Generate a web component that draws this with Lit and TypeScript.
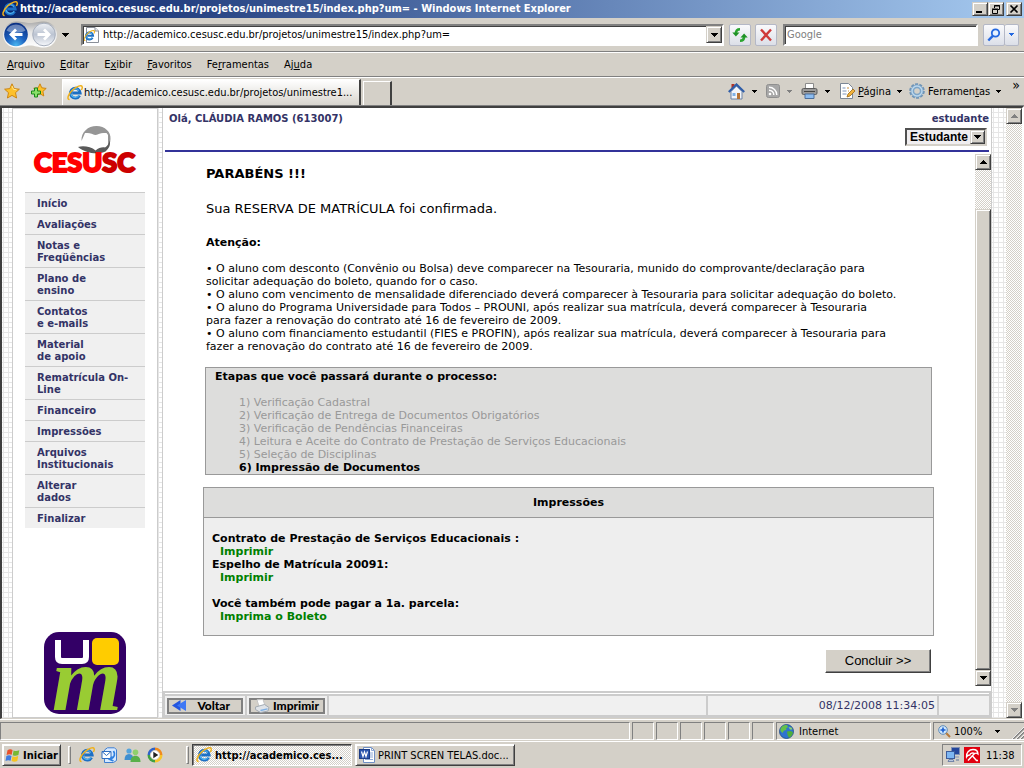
import { LitElement, html, svg, css, nothing, TemplateResult } from "lit";
import { customElement } from "lit/decorators.js";

const icon = (w: number, h: number, box: string, body: unknown) =>
  html`<svg class="icon" width=${w} height=${h} viewBox=${box} aria-hidden="true">${body}</svg>`;

const ieShape = svg`
  <path d="M12.6 10.6A4.9 4.9 0 1 1 13.2 8H5.2" fill="none" stroke="#1c6fc4" stroke-width="2.9"/>
  <path d="M12.2 10.2A4.5 4.5 0 0 1 4 9" fill="none" stroke="#4fb2ee" stroke-width="1.2"/>
  <path d="M4.6 5.6A4.6 4.6 0 0 1 12 5.5" fill="none" stroke="#63c3f6" stroke-width="1"/>
  <path d="M2.6 14.6C-.6 14.6 1.2 9 5.6 5 9.6 1.200 14.600-.4 15.200 1.800c.3 1-.3 2.300-.8 3.200" fill="none" stroke="#f0b11c" stroke-width="1.500"/>`;

const ie = (s = 16) => icon(s, s, "0 0 16 16", ieShape);

const pageIe = icon(16, 16, "0 0 16 16", svg`
  <path d="M2.500 .5h8.500l3.500 3.500v11.500h-12z" fill="#fff" stroke="#8a8f98"/>
  <path d="M11 .5V4h3.500" fill="#e8ecf2" stroke="#8a8f98"/>
  <g transform="translate(-.5 3) scale(.72)">${ieShape}</g>`);

const caret = (color = "#000", up = false) =>
  icon(7, 4, "0 0 7 4", up
    ? svg`<path d="M3 0h1v1h1v1h1v1h1v1H0V3h1V2h1V1h1z" fill=${color}/>`
    : svg`<path d="M0 0h7v1H6v1H5v1H4v1H3V3H2V2H1V1H0z" fill=${color}/>`);

const smallCaret = (color = "#000") =>
  icon(5, 3, "0 0 5 3", svg`<path d="M0 0h5v1H4v1H3v1H2V2H1V1H0z" fill=${color}/>`);

const navArrows = icon(57, 27, "0 0 57 27", svg`
  <defs>
    <radialGradient id="bk" cx=".5" cy=".95" r=".9"><stop offset="0" stop-color="#49b4ef"/><stop offset=".45" stop-color="#1d62c0"/><stop offset="1" stop-color="#0b3184"/></radialGradient>
    <linearGradient id="fw" x1="0" y1="0" x2="0" y2="1"><stop offset="0" stop-color="#eef1f5"/><stop offset=".5" stop-color="#bcc4d2"/><stop offset="1" stop-color="#f6f8fb"/></linearGradient>
    <linearGradient id="rim" x1="0" y1="0" x2="0" y2="1"><stop offset="0" stop-color="#a9a9a9"/><stop offset=".4" stop-color="#e6e6e6"/><stop offset="1" stop-color="#fff"/></linearGradient>
  </defs>
  <path d="M14 .5C21 .5 23 2 28 2S36 .5 42 .5a13 13 0 0 1 0 26c-6 0-9-2-14-2s-7 2-14 2a13 13 0 0 1 0-26z" fill="url(#rim)"/>
  <circle cx="14" cy="13.500" r="11.800" fill="url(#bk)"/>
  <path d="M4.500 9.500a10.500 10.500 0 0 1 19 0c-5 3-14 3-19 0z" fill="#fff" opacity=".38"/>
  <path d="M20.500 13.500H9.500M14 8.500l-5 5 5 5" fill="none" stroke="#fff" stroke-width="2.800"/>
  <circle cx="42" cy="13.500" r="11.300" fill="url(#fw)" stroke="#a7afbd"/>
  <path d="M35.500 13.500h11M42 8.500l5 5-5 5" fill="none" stroke="#fff" stroke-width="2.800"/>`);

const refresh = icon(16, 16, "0 0 16 16", svg`
  <path d="M8 2.200C4.800 2.200 3.900 3.800 3.900 6.500" fill="none" stroke="#2ba530" stroke-width="2.600"/>
  <path d="M.3 5.500h7.200L3.900 9.600z" fill="#1f9226"/>
  <path d="M8 13.800c3.200 0 4.100-1.600 4.100-4.300" fill="none" stroke="#2ba530" stroke-width="2.600"/>
  <path d="M8.500 10.500h7.200l-3.600-4.100z" fill="#1f9226"/>`);

const stop = icon(14, 14, "0 0 14 14", svg`
  <path d="M2 1.500l10 11M12 1.500l-10 11" stroke="#cf3a3a" stroke-width="2.400"/>`);

const magnifier = icon(14, 14, "0 0 14 14", svg`
  <circle cx="8.500" cy="5" r="3.700" fill="#e6f1ff" stroke="#2468e0" stroke-width="1.800"/>
  <path d="M5.800 7.800L1.300 12.500" stroke="#2468e0" stroke-width="2.400"/>`);

const star = icon(16, 16, "0 0 16 16", svg`
  <path d="M8 .8l2.200 4.800 5.200.6-3.900 3.500 1.100 5.300L8 12.400 3.400 15l1.100-5.300L.6 6.200l5.200-.6z" fill="#fdc12c" stroke="#c97f0a" stroke-width=".9"/>
  <path d="M8 3l1.500 3.300 3 .5" fill="none" stroke="#ffe79a"/>`);

const addStar = icon(17, 16, "0 0 17 16", svg`
  <path d="M10 .8l1.800 4 4.400.6-3.300 3 .9 4.600L10 10.700 6 13l1-4.600-3.300-3 4.400-.6z" fill="#fdc12c" stroke="#c97f0a" stroke-width=".9"/>
  <path d="M4.500 5h3v3h3v3h-3v3h-3v-3h-3V8h3z" fill="#8be06a" stroke="#178a1b"/>`);

const home = icon(17, 17, "0 0 17 17", svg`
  <path d="M3.500 1h3v4h-3z" fill="#b03325"/>
  <path d="M3 8.500L8.500 3l5.500 5.500V16H3z" fill="#f2f5fa" stroke="#6d83a5"/>
  <path d="M.8 9L8.500 1.500 16.200 9" fill="none" stroke="#2f5da8" stroke-width="2.200"/>
  <path d="M9 10h3v6H9z" fill="#b77434"/><path d="M4.500 10h3v3h-3z" fill="#7fb1e6"/>`);

const feed = icon(14, 14, "0 0 14 14", svg`
  <rect x=".5" y=".5" width="13" height="13" rx="2" fill="#a7a7a7" stroke="#8f8f8f"/>
  <circle cx="4" cy="10" r="1.300" fill="#fff"/>
  <path d="M3 6.200a4.800 4.800 0 0 1 4.800 4.800M3 3.200a7.800 7.800 0 0 1 7.800 7.800" fill="none" stroke="#fff" stroke-width="1.400"/>`);

const printer = icon(17, 16, "0 0 17 16", svg`
  <path d="M4.500 .5h8V6h-8z" fill="#fff" stroke="#8b8b8b"/>
  <rect x="1" y="5.500" width="15" height="6" rx="1.500" fill="#9a9a9a" stroke="#5c5c5c"/>
  <path d="M3 8.500h11" stroke="#444"/>
  <path d="M4 11h9v4.500H4z" fill="#8cbcf0" stroke="#4c6f9c"/>`);

const pageIcon = icon(16, 16, "0 0 16 16", svg`
  <path d="M1.500 .5h8l4 4v11h-12z" fill="#fff" stroke="#7c8796"/>
  <path d="M3.500 5h3M3.500 8h4M3.500 11h4" stroke="#7a93bb"/><path d="M8 5h2M9 8h1" stroke="#c98b39"/>
  <path d="M8 14l1-3 5-5 2 2-5 5z" fill="#f2b33c" stroke="#9a6716" stroke-width=".8"/>`);

const gear = icon(16, 16, "0 0 16 16", svg`
  <circle cx="8" cy="8" r="6.800" fill="none" stroke="#6f93b5" stroke-width="2" stroke-dasharray="3 1.270"/>
  <circle cx="8" cy="8" r="4.600" fill="none" stroke="#7da5c8" stroke-width="3.600"/>
  <circle cx="8" cy="8" r="5" fill="none" stroke="#bcd8ee" stroke-width="1.400"/>`);

const globe = icon(15, 15, "0 0 15 15", svg`
  <circle cx="7.500" cy="7.500" r="7" fill="#2f74cf" stroke="#1c4784" stroke-width=".8"/>
  <path d="M3 2.500c2-1.500 4-1.700 5-1.500l1 2-2 1.500.5 1.500-2.500.5L3.500 9 1.500 7C1 5.500 2 3.500 3 2.500z" fill="#63c04a"/>
  <path d="M8 7.500l4-.5 2 1.500c-.3 2.500-2 4.500-4 5.300L8.500 11z" fill="#4fae3c"/>
  <path d="M9.500 3l3 .5 1 2-2.500 0z" fill="#8bd46c"/>`);

const zoomIn = icon(13, 13, "0 0 13 13", svg`
  <circle cx="5" cy="5" r="4.300" fill="#cfe6fb" stroke="#5f8ab8"/>
  <path d="M5 2.500v5M2.500 5h5" stroke="#1b5fd0" stroke-width="1.600"/>
  <path d="M8.300 8.300l3.700 3.700" stroke="#b77a3a" stroke-width="2"/>`);

const flag = icon(16, 15, "0 0 16 15", svg`
  <path d="M2.500 2.200C4.500 1 6 1.200 7.600 2L6.700 6.800C5 6 3.500 6.100 1.600 7z" fill="#e8512a"/>
  <path d="M8.600 2.400c1.900.9 3.700.8 5.700-.2l-.9 4.900c-2 1-3.800 1-5.700.1z" fill="#78b833"/>
  <path d="M1.400 8C3.300 7 4.900 7.200 6.500 7.900l-.9 4.900C4 12 2.400 12 .5 13z" fill="#3f7be0"/>
  <path d="M7.500 8.300c1.900.9 3.700.8 5.700-.2l-.9 4.900c-2 1-3.800 1-5.700.1z" fill="#f6c321"/>`);

const outlook = icon(17, 16, "0 0 17 16", svg`
  <path d="M3.500 3l3-2.200h7l2 2v10.700l-3 2h-9z" fill="#d6e9ff" stroke="#3f7ed0"/>
  <path d="M1 4.500h9v7H1z" fill="#fff" stroke="#2f6dc0"/>
  <path d="M1 4.500l4.500 4 4.500-4" fill="none" stroke="#2f6dc0"/>
  <path d="M12.500 4c2 3 1 6.500-2.500 8M11.500 9.500L8.500 12.300l4 1.700" fill="none" stroke="#2f80e0" stroke-width="1.700"/>`);

const messenger = icon(17, 16, "0 0 17 16", svg`
  <circle cx="5" cy="4" r="2.600" fill="#55a4dd"/><path d="M.5 13c0-4 1.500-6 4.500-6s4.500 2 4.500 6z" fill="#3f8fd0"/>
  <circle cx="11.500" cy="5.300" r="2.800" fill="#8fd06d"/><path d="M6.500 15c0-4 1.800-6.300 5-6.300s5 2.300 5 6.300z" fill="#58b04a"/>`);

const player = icon(16, 16, "0 0 16 16", svg`
  <path d="M8 8V.5A7.500 7.500 0 0 1 15.500 8z" fill="#f08a1d"/><path d="M8 8h7.500A7.500 7.500 0 0 1 8 15.500z" fill="#f7c52b"/>
  <path d="M8 8v7.500A7.500 7.500 0 0 1 .5 8z" fill="#41a141"/><path d="M8 8H.5A7.500 7.500 0 0 1 8 .5z" fill="#2e62c8"/>
  <circle cx="8" cy="8" r="4.600" fill="#fff" stroke="#d7d2c6"/><path d="M6.300 4.800L11.300 8l-5 3.200z" fill="#222"/>`);

const word = icon(16, 16, "0 0 16 16", svg`
  <path d="M4.500 .5h8l3 3v12h-11z" fill="#fff" stroke="#6f8fc4"/>
  <path d="M12.500 .5v3h3M11 6h3M11 8h3M11 10h3M6 12.500h8" fill="none" stroke="#8fa9d6"/>
  <rect x=".5" y="2.500" width="10" height="9" fill="#2c56ad" stroke="#1c3c86"/>
  <path d="M2.500 4.500l1.500 5 1.500-4.500L7 9.500l1.500-5" fill="none" stroke="#fff" stroke-width="1.200"/>`);

const network = icon(16, 16, "0 0 16 16", svg`
  <rect x="6.500" y=".5" width="8" height="7" fill="#24469c" stroke="#8292b5"/><path d="M9 9.500h5v1H9z" fill="#8292b5"/>
  <rect x="1.500" y="4.500" width="8" height="7" fill="#7db6f2" stroke="#3c5c9c"/>
  <path d="M3 14.500h6l-1-2H4z" fill="#b9c6df" stroke="#5f749e" stroke-width=".8"/><path d="M11 13h3" stroke="#5f749e"/>`);

const umbrella = icon(16, 16, "0 0 16 16", svg`
  <path d="M0 0h16v16H0z" fill="#e1000f"/>
  <path d="M2.500 10C2 6 5 2.500 9 2.500c3 0 5 1.700 5 4.500-.9-.9-2.200-1.100-3.200-.5C8.500 5.500 6.500 6 5.800 8 4.500 7.900 3.300 8.600 2.500 10z" fill="none" stroke="#fff" stroke-width="1.300"/>
  <path d="M10.500 6.500L4 13.500M8.500 9l4 4.500h1.500" fill="none" stroke="#fff" stroke-width="1.400"/>`);

const rewind = icon(15, 11, "0 0 15 11", svg`
  <path d="M8.500 0v11L0 5.500z" fill="#2456e0"/><path d="M14 0v11L5 5.500z" fill="#3f78f5"/>`);

const paperPrinter = icon(16, 14, "0 0 16 14", svg`
  <path d="M3 .8l6-.3 2 6-6 1z" fill="#fff" stroke="#c4c4c4"/>
  <path d="M1.500 8l9-2.500 4.500 3-1 3.500-7.500 1.500-5-3z" fill="#dfe3e8" stroke="#a3abb3"/>
  <path d="M6.500 11.500l7-1.700" stroke="#7fb0e4" stroke-width="1.300"/>`);

const grip = icon(12, 12, "0 0 12 12", svg`
  <path d="M12 1L1 12M12 5l-7 7M12 9l-3 3" stroke="#808080" stroke-width="1.600"/>
  <path d="M12 0L0 12M12 4l-8 8M12 8l-4 4" stroke="#fff" stroke-width=".8"/>`);

const umLogo = html`<svg width="82" height="82" viewBox="0 0 82 82" role="img" aria-label="Unimestre">
  <rect width="82" height="82" rx="15" fill="#330066"/>
  <path d="M14 8v17q0 4 4 4h20q4 0 4-4V8" fill="none" stroke="#fff" stroke-width="6"/>
  <rect x="48" y="6" width="27" height="27" rx="5" fill="#ffcc00"/>
  <text x="8" y="78" class="um-letter">m</text>
</svg>`;

const cesuscLogo = html`<svg width="104" height="50" viewBox="0 0 104 50" role="img" aria-label="CESUSC">
  <path d="M48.500 16C48 7 55 1 63.500 1 72 1 78 7 77.500 14c0 4-1.500 7-4.500 9l2-9-3-6-9.500 2L52 8z" fill="#969696"/>
  <path d="M52 8c4-.5 8 .5 10.600 3.500C65 8.500 69 7.500 73.500 8l1.500 2v12c-5-1-9 .5-12.400 4-3-3.500-6.600-4.500-10.600-4z" fill="#fff"/>
  <path d="M45 22c5-1.500 13-.5 17.600 3.500 3-3 7-3.500 9.400-3 2.500-1.500 4-4 4.500-7 1.500 4-.5 8-4 11-7 3.500-20 2-27.500-4.500z" fill="#5a5a5a"/>
  <text x="1" y="47" class="cesusc"><tspan fill="#ff0000" stroke="#ff0000">CESU</tspan><tspan fill="#cc0000" stroke="#cc0000">SC</tspan></text>
</svg>`;

const MENU: [string, string, string][] = [
  ["", "A", "rquivo"], ["", "E", "ditar"], ["E", "x", "ibir"],
  ["", "F", "avoritos"], ["Fe", "r", "ramentas"], ["Aj", "u", "da"],
];

const SIDE: string[][] = [
  ["Início"], ["Avaliações"], ["Notas e", "Freqüências"], ["Plano de", "ensino"],
  ["Contatos", "e e-mails"], ["Material", "de apoio"], ["Rematrícula On-", "Line"],
  ["Financeiro"], ["Impressões"], ["Arquivos", "Institucionais"], ["Alterar", "dados"], ["Finalizar"],
];

const NOTICES: string[][] = [
  ["O aluno com desconto (Convênio ou Bolsa) deve comparecer na Tesouraria, munido do comprovante/declaração para", "solicitar adequação do boleto, quando for o caso."],
  ["O aluno com vencimento de mensalidade diferenciado deverá comparecer à Tesouraria para solicitar adequação do boleto."],
  ["O aluno do Programa Universidade para Todos – PROUNI, após realizar sua matrícula, deverá comparecer à Tesouraria", "para fazer a renovação do contrato até 16 de fevereiro de 2009."],
  ["O aluno com financiamento estudantil (FIES e PROFIN), após realizar sua matrícula, deverá comparecer à Tesouraria para", "fazer a renovação do contrato até 16 de fevereiro de 2009."],
];

const STEPS = [
  "Verificação Cadastral", "Verificação de Entrega de Documentos Obrigatórios",
  "Verificação de Pendências Financeiras",
  "Leitura e Aceite do Contrato de Prestação de Serviços Educacionais",
  "Seleção de Disciplinas", "Impressão de Documentos",
];

const lines = (parts: string[]) => parts.map((p, i) => html`${i ? html`<br />` : nothing}${p}`);

const shared = css`
  :host { box-sizing: border-box; }
  *, *::before { box-sizing: border-box; }
  button, input, select { font: inherit; color: inherit; margin: 0; padding: 0; border-radius: 0; }
  a { color: inherit; text-decoration: none; }
  .icon { display: block; flex: none; }
  .raised {
    background: #d4d0c8; border: 1px solid; border-color: #d4d0c8 #404040 #404040 #d4d0c8;
    box-shadow: inset 1px 1px 0 #fff, inset -1px -1px 0 #808080;
    display: flex; align-items: center; justify-content: center;
  }
`;

@customElement("scroll-strip")
class ScrollStrip extends LitElement {
  static properties = { disabled: { type: Boolean } };
  declare disabled: boolean;
  static styles = [shared, css`
    :host {
      display: flex; flex-direction: column; flex: none; width: 16px;
      background: repeating-conic-gradient(#fff 0 25%, #d4d0c8 0 50%) 0 0 / 2px 2px;
    }
    button { width: 16px; height: 16px; flex: none; }
    .before { flex: 39; }
    .thumb { flex: 460; }
    .free { flex: 1; }
  `];
  render() {
    const tone = this.disabled ? "#808080" : "#000";
    return html`
      <button class="raised" aria-label="Rolar para cima" ?disabled=${this.disabled}>${caret(tone, true)}</button>
      ${this.disabled
        ? html`<div class="free"></div>`
        : html`<div class="before"></div><div class="thumb raised"></div>`}
      <button class="raised" aria-label="Rolar para baixo" ?disabled=${this.disabled}>${caret(tone)}</button>`;
  }
}

@customElement("browser-chrome")
class BrowserChrome extends LitElement {
  static styles = [shared, css`
    :host { display: block; }
    .title {
      height: 18px; display: flex; align-items: center; gap: 2px; padding: 0 2px;
      background: linear-gradient(90deg, #0a246a, #a6caf0); color: #fff;
      font: bold 11px/18px "DejaVu Sans Condensed", "DejaVu Sans", sans-serif;
    }
    .title .text { flex: 1; white-space: nowrap; overflow: hidden; }
    .win { display: flex; }
    .win button { width: 16px; height: 14px; }
    .win button:last-child { margin-left: 2px; }
    .bar { display: flex; align-items: center; border-bottom: 1px solid #808080; box-shadow: 0 1px 0 #fff; }
    .address { height: 34px; padding: 0 5px 0 2px; }
    .drop { background: none; border: 0; padding: 0 12px 0 3px; }
    .field {
      display: flex; align-items: center; height: 22px; background: #fff;
      border: 2px solid; border-color: #808080 #fff #fff #808080; box-shadow: inset 1px 1px 0 #404040;
    }
    .field input { border: 0; outline: 0; background: none; flex: 1; min-width: 0; }
    .url { flex: 1; padding-left: 1px; gap: 3px; }
    .url button { width: 16px; height: 17px; }
    .soft {
      height: 22px; width: 22px; display: flex; align-items: center; justify-content: center;
      background: linear-gradient(#fafafc, #dcdfe8); border: 1px solid #b4b8c6; border-radius: 2px;
    }
    .search { width: 195px; padding-left: 2px; color: #808080; }
    .g1 { margin-left: 5px; } .g2 { margin-left: 4px; } .g3 { margin-left: 6px; } .g4 { margin-left: 5px; }
    .narrow { width: 14px; border-left: 0; }
    .menu { height: 25px; padding: 0 7px; gap: 15px; }
    .menu button { border: 0; background: none; }
    .tabs { height: 29px; align-items: flex-end; }
    .favs { display: flex; gap: 10px; padding: 0 15px 6px 4px; }
    .tab {
      width: 299px; height: 26px; display: flex; align-items: center; gap: 1px; padding: 0 4px;
      background: linear-gradient(#fff, #d8d5ce); border: 1px solid #fff; border-right: 2px solid #404040; border-bottom: 0;
      white-space: nowrap;
    }
    .newtab { width: 29px; height: 24px; margin-left: 2px; background: #d4d0c8; border: 1px solid #fff; border-right: 2px solid #404040; border-bottom: 0; }
    .tools { flex: 1; align-self: stretch; display: flex; align-items: center; justify-content: flex-end; white-space: nowrap; padding-right: 4px; }
    .tools button { border: 0; background: none; display: flex; align-items: center; height: 20px; }
    .lone { gap: 7px; margin-right: 9px; }
    .named { gap: 3px; margin-right: 7px; }
    .named .icon:last-child { margin-left: 3px; }
    .tools .more { align-self: flex-start; margin-left: 4px; height: 16px; font-size: 14px; }
  `];
  render() {
    return html`
      <header class="title">
        ${ie()}
        <span class="text">http://academico.cesusc.edu.br/projetos/unimestre15/index.php?um= - Windows Internet Explorer</span>
        <div class="win">
          <button class="raised" aria-label="Minimizar">${icon(10, 8, "0 0 10 8", svg`<path d="M1 6h6v2H1z"/>`)}</button>
          <button class="raised" aria-label="Restaurar">${icon(10, 9, "0 0 10 9", svg`<path d="M3.500 3V.5h5v4H7M3 1h6M1.500 4.500h5v4h-5zM1 4h6" fill="none" stroke="#000"/>`)}</button>
          <button class="raised" aria-label="Fechar">${icon(10, 8, "0 0 10 8", svg`<path d="M1.500 .5l7 7M8.500 .5l-7 7" stroke="#000" stroke-width="1.600"/>`)}</button>
        </div>
      </header>
      <div class="bar address">
        ${navArrows}
        <button class="drop" aria-label="Páginas recentes">${caret()}</button>
        <div class="field url">
          ${pageIe}
          <input type="text" aria-label="Endereço" value="http://academico.cesusc.edu.br/projetos/unimestre15/index.php?um=" />
          <button class="raised" aria-label="Endereços digitados">${caret()}</button>
        </div>
        <button class="soft g1" aria-label="Atualizar">${refresh}</button>
        <button class="soft g2" aria-label="Parar">${stop}</button>
        <div class="field search g3"><input type="text" aria-label="Pesquisar" value="Google" /></div>
        <button class="soft g4" aria-label="Pesquisar">${magnifier}</button>
        <button class="soft narrow" aria-label="Opções de pesquisa">${smallCaret("#2468e0")}</button>
      </div>
      <nav class="bar menu">
        ${MENU.map(([a, k, b]) => html`<button>${a}<u>${k}</u>${b}</button>`)}
      </nav>
      <div class="bar tabs">
        <div class="favs">${star}${addStar}</div>
        <div class="tab">${ie()}<span>http://academico.cesusc.edu.br/projetos/unimestre1...</span></div>
        <button class="newtab" aria-label="Nova guia"></button>
        <div class="tools">
          <button class="lone" aria-label="Página inicial">${home}${smallCaret()}</button>
          <button class="lone" aria-label="Feeds">${feed}${smallCaret("#808080")}</button>
          <button class="lone" aria-label="Imprimir">${printer}${smallCaret()}</button>
          <button class="named">${pageIcon}<span><u>P</u>ágina</span>${smallCaret()}</button>
          <button class="named">${gear}<span>Ferramen<u>t</u>as</span>${smallCaret()}</button>
          <button class="more" aria-label="Mais">»</button>
        </div>
      </div>`;
  }
}

@customElement("student-page")
class StudentPage extends LitElement {
  static styles = [shared, css`
    :host {
      flex: 1; display: flex; border: 2px solid; border-color: #404040 #fff #d4d0c8 #404040; border-bottom-width: 1px;
      background: #fff; font: 11px/13px "DejaVu Sans", Verdana, sans-serif; color: #000;
    }
    .grid {
      flex: 1; min-width: 0; display: flex; padding: 0 14px 0 10px;
      background:
        linear-gradient(90deg, #e6e6e6 1px, transparent 1px) 1px 0 / 5px 5px,
        linear-gradient(#e6e6e6 1px, transparent 1px) 0 4px / 5px 5px #fff;
    }
    .side {
      width: 146px; flex: none; margin-right: 4px; background: #fff; border: 1px solid #ccc;
      display: flex; flex-direction: column; align-items: center; padding: 16px 0 3px;
    }
    .side svg { overflow: visible; }
    .cesusc { font: 900 27px "Lato", sans-serif; stroke-width: 2px; }
    .um-letter { font: italic bold 90px "Liberation Serif", serif; fill: #99cc33; }
    .links { list-style: none; margin: 17px 0 0; padding: 0; width: 120px; }
    .links a {
      display: block; border-top: 1px solid #ccc; background: #f0f0f0; padding: 5px 0 3px 12px;
      font: bold 10px/12px "DejaVu Sans", Verdana, sans-serif; color: #333366; white-space: nowrap;
    }
    .um { margin-top: auto; display: flex; }
    .main {
      flex: 1; min-width: 0; background: #fff; border-left: 1px solid #ccc; border-right: 1px solid #ccc;
      display: flex; flex-direction: column;
    }
    .head {
      margin: 0 2px; padding: 5px 0 4px 4px; border-bottom: 2px solid #333399; display: flex; justify-content: space-between;
      font: bold 10px/12px "DejaVu Sans", Verdana, sans-serif; color: #333366;
    }
    .who { display: flex; flex-direction: column; align-items: flex-end; gap: 3px; }
    .pick {
      display: flex; height: 18px; width: 82px; background: #f0eef0; margin-right: 2px;
      border: 2px solid; border-color: #505050 #d4d0c8 #d4d0c8 #505050;
      font: bold 12px/14px "Liberation Sans", Arial, sans-serif; color: #000; position: relative;
    }
    .pick select { appearance: none; border: 0; background: none; flex: 1; min-width: 0; padding-left: 3px; outline: 0; }
    .pick .raised { width: 15px; position: absolute; right: 0; top: 0; bottom: 0; pointer-events: none; }
    .pane { flex: 1; display: flex; padding: 2px 0 5px; }
    .body { flex: 1; min-width: 0; padding: 12px 41px 8px 40px; }
    .indent { padding-left: 3px; }
    h1 { font: bold 13px/16px "DejaVu Sans", Verdana, sans-serif; margin: 0; }
    .big { font-size: 13px; line-height: 16px; margin: 19px 0 0; }
    h2 { font-size: 11px; line-height: 13px; margin: 19px 0 13px; }
    .notes { list-style: none; margin: 0; padding: 0; white-space: nowrap; }
    .steps { margin: 14px 2px 0; border: 1px solid #999; background: #dddddc; padding: 2px 9px 0; }
    .steps strong { display: block; }
    .steps ol { list-style: none; margin: 13px 0 0; padding: 0 0 0 24px; color: #999; }
    .steps .now { color: #000; font-weight: bold; }
    .prints { margin-top: 12px; border: 1px solid #999; background: #eee; font-weight: bold; }
    .prints h3 { margin: 0; font-size: 11px; line-height: 29px; text-align: center; background: #dddddc; border-bottom: 1px solid #999; }
    .prints dl { margin: 0; padding: 14px 8px 12px; }
    .prints dd { margin: 0 0 0 8px; color: #008000; }
    .prints .gap { margin-top: 13px; }
    .end { display: flex; justify-content: flex-end; margin: 13px 3px 0; }
    .end button { width: 106px; height: 24px; font: 13px/16px "Liberation Sans", Arial, sans-serif; border-color: #fff #404040 #404040 #fff; box-shadow: inset -1px -1px 0 #808080; }
    .foot { background: #ccc; padding: 2px 2px 3px; }
    .foot .row { border-top: 1px solid #fff; padding-top: 2px; display: flex; gap: 2px; color: #333366; white-space: nowrap; }
    .cell { background: #f0f0f0; height: 19px; padding: 1px 2px; display: flex; align-items: center; }
    .cell button {
      width: 76px; height: 16px; background: #d4d0c8; border: 2px solid #808080; display: flex; align-items: center; justify-content: space-between; padding: 0 11px 0 3px;
      font: 900 12px/12px "Lato", sans-serif; color: #000;
    }
    .cell .tight { padding-right: 4px; }
    .grow { flex: 1; }
    .date { width: 229px; justify-content: flex-end; }
    .last { width: 50px; }
  `];
  render() {
    return html`
      <div class="grid">
        <aside class="side">
          ${cesuscLogo}
          <ul class="links">${SIDE.map((s) => html`<li><a href="#">${lines(s)}</a></li>`)}</ul>
          <div class="um">${umLogo}</div>
        </aside>
        <main class="main">
          <header class="head">
            <span>Olá, CLÁUDIA RAMOS (613007)</span>
            <div class="who">
              <label for="role">estudante</label>
              <div class="pick">
                <select id="role"><option>Estudante</option></select>
                <span class="raised">${caret()}</span>
              </div>
            </div>
          </header>
          <div class="pane">
            <section class="body">
              <div class="indent">
                <h1>PARABÉNS !!!</h1>
                <p class="big">Sua RESERVA DE MATRÍCULA foi confirmada.</p>
                <h2>Atenção:</h2>
                <ul class="notes">${NOTICES.map((n) => html`<li>• ${lines(n)}</li>`)}</ul>
              </div>
              <div class="steps">
                <strong>Etapas que você passará durante o processo:</strong>
                <ol>${STEPS.map((s, i) => html`<li class=${i === STEPS.length - 1 ? "now" : ""}>${i + 1}) ${s}</li>`)}</ol>
              </div>
              <section class="prints">
                <h3>Impressões</h3>
                <dl>
                  <dt>Contrato de Prestação de Serviços Educacionais :</dt>
                  <dd><a href="#">Imprimir</a></dd>
                  <dt>Espelho de Matrícula 20091:</dt>
                  <dd><a href="#">Imprimir</a></dd>
                  <dt class="gap">Você também pode pagar a 1a. parcela:</dt>
                  <dd><a href="#">Imprima o Boleto</a></dd>
                </dl>
              </section>
              <div class="end"><button class="raised">Concluir &gt;&gt;</button></div>
            </section>
            <scroll-strip></scroll-strip>
          </div>
          <footer class="foot">
            <div class="row">
              <div class="cell"><button>${rewind}Voltar</button></div>
              <div class="cell"><button class="tight">${paperPrinter}Imprimir</button></div>
              <div class="cell grow"></div>
              <div class="cell date">08/12/2008 11:34:05</div>
              <div class="cell last"></div>
            </div>
          </footer>
        </main>
      </div>
      <scroll-strip disabled></scroll-strip>`;
  }
}

@customElement("desktop-bars")
class DesktopBars extends LitElement {
  static styles = [shared, css`
    :host { display: block; }
    .status { display: flex; gap: 2px; padding: 2px 0 1px; height: 22px; border-top: 1px solid #fff; }
    .panel { border: 1px solid; border-color: #808080 #fff #fff #808080; display: flex; align-items: center; width: 22px; gap: 5px; padding: 0 2px; }
    .fill { flex: 1; }
    .zone { width: 155px; }
    .zoom { width: 91px; padding: 0 0 0 4px; gap: 3px; border-right: 0; position: relative; }
    .zoom .icon:nth-of-type(2) { margin-left: 10px; }
    .zoom .icon:last-child { position: absolute; right: 0; bottom: 0; }
    .task { display: flex; align-items: center; height: 27px; border-top: 1px solid #fff; padding: 0 2px; white-space: nowrap; }
    .start { width: 59px; height: 22px; gap: 2px; font-weight: bold; border-color: #fff #404040 #404040 #fff; }
    .rule { width: 3px; height: 18px; background: #d4d0c8; border: 1px solid; border-color: #fff #808080 #808080 #fff; margin-left: 7px; }
    .quick { display: flex; gap: 6px; padding: 0 16px 0 8px; }
    .win { width: 160px; height: 22px; gap: 3px; justify-content: flex-start; padding: 0 3px; margin-left: 3px; border-color: #fff #404040 #404040 #fff; overflow: hidden; }
    .on {
      font-weight: bold; border-color: #404040 #fff #fff #404040; box-shadow: inset 1px 1px 0 #808080;
      background: repeating-conic-gradient(#fff 0 25%, #d4d0c8 0 50%) 0 0 / 2px 2px;
    }
    .tray { margin-left: auto; height: 22px; width: 80px; display: flex; align-items: center; gap: 3px; padding: 0 2px; border: 1px solid; border-color: #808080 #fff #fff #808080; }
    .tray time { margin-left: 3px; }
  `];
  render() {
    return html`
      <div class="status">
        <div class="panel fill"></div>
        ${[1, 2, 3, 4, 5, 6].map(() => html`<div class="panel"></div>`)}
        <div class="panel zone">${globe}<span>Internet</span></div>
        <div class="panel zoom">${zoomIn}<span>100%</span>${smallCaret()}${grip}</div>
      </div>
      <div class="task">
        <button class="raised start">${flag}Iniciar</button>
        <span class="rule"></span>
        <div class="quick">${ie()}${outlook}${messenger}${player}</div>
        <span class="rule"></span>
        <button class="raised win on">${ie()}<span>http://academico.ces...</span></button>
        <button class="raised win">${word}<span>PRINT SCREN TELAS.doc...</span></button>
        <div class="tray">${network}${umbrella}<time>11:38</time></div>
      </div>`;
  }
}

@customElement("app-root")
class AppRoot extends LitElement {
  static styles = css`
    :host {
      display: flex; flex-direction: column; min-height: 100vh; box-sizing: border-box; background: #d4d0c8; color: #000;
      font: 11px/13px "DejaVu Sans Condensed", Tahoma, "DejaVu Sans", sans-serif;
    }
  `;
  render(): TemplateResult {
    return html`<browser-chrome></browser-chrome><student-page></student-page><desktop-bars></desktop-bars>`;
  }
}
